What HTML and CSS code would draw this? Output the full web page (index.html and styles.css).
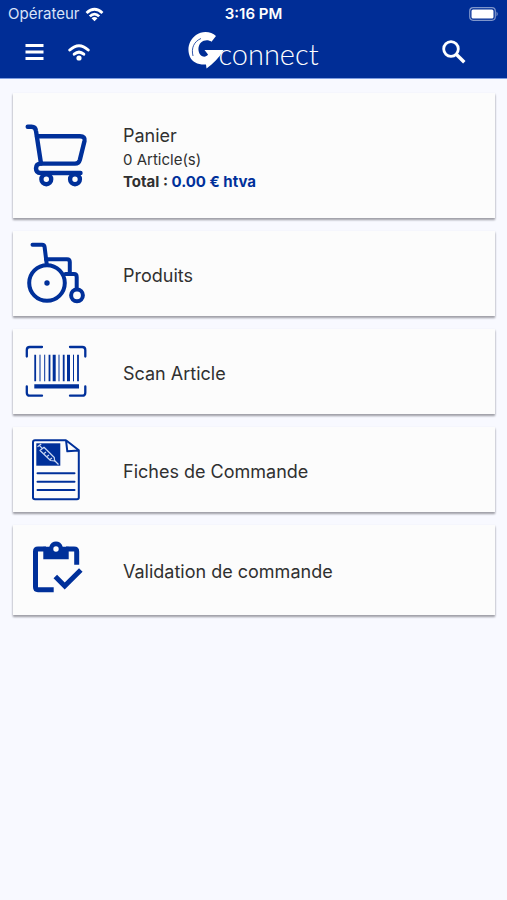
FILE: index.html
```html
<!DOCTYPE html>
<html lang="fr">
<head>
<meta charset="utf-8">
<meta name="viewport" content="width=device-width, initial-scale=1">
<title>Gconnect</title>
<link rel="stylesheet" href="styles.css">
</head>
<body>
<header class="header">
  <div class="status">
    <div class="carrier">
      <span>Opérateur</span>
      <svg class="signal" viewBox="0 0 20 16" aria-hidden="true">
        <g fill="none" stroke="#fff" stroke-width="3"><path d="M1.5 6.5Q10-1.5 18.5 6.500"/><path d="M5 10Q10 5 15 10"/></g>
        <path fill="#fff" d="M6.800 12Q10 9.500 13.200 12L10 15.200Z"/>
      </svg>
    </div>
    <span class="time">3:16 PM</span>
    <svg class="battery" viewBox="0 0 30 14" aria-hidden="true">
      <rect x=".7" y=".7" width="25.600" height="12.600" rx="3.500" fill="none" stroke="#7f96cb" stroke-width="1.200"/>
      <rect x="2.500" y="2.500" width="22" height="9" rx="1.500" fill="#fff"/>
      <path d="M27.500 4.500Q30 7 27.500 9.500Z" fill="#7f96cb"/>
    </svg>
  </div>
  <nav class="toolbar">
    <div class="tools">
      <button class="tool" type="button" aria-label="Menu">
        <svg class="menu-icon" viewBox="0 0 18 16"><path d="M0 1.500H18M0 8H18M0 14.500H18" stroke="#fff" stroke-width="3"/></svg>
      </button>
      <button class="tool" type="button" aria-label="Connexion">
        <svg class="wifi-icon" viewBox="0 0 22 17">
          <g fill="none" stroke="#fff" stroke-width="3" stroke-linecap="round"><path d="M1.800 6Q11-2.500 20.200 6"/><path d="M6.200 10.200Q11 6 15.800 10.200"/></g>
          <circle cx="11" cy="14" r="2.600" fill="#fff"/>
        </svg>
      </button>
    </div>
    <a class="brand" href="#" aria-label="Gconnect">
      <svg class="brand-mark" viewBox="0 0 36 38" aria-hidden="true">
        <path fill="#fff" d="M28 5C23 0 14-.5 8 4C1 9 -1.500 18 2 26C4.500 31 10 34 18 33.500L18.500 37.500C25 33 31 27 35.500 19H16.500L20 23.500C18.500 26 15 26.500 12.500 24C9.500 20.500 9.800 14.500 13 11.500C16 8.800 20.500 8.500 23.500 10.800Z"/>
        <path fill="none" stroke="#002d96" stroke-width=".8" d="M13 7.500C6 10.500 3 17 5 25"/>
      </svg>
      <span class="brand-name">connect</span>
    </a>
    <button class="tool search" type="button" aria-label="Rechercher">
      <svg class="search-icon" viewBox="0 0 24 24"><circle cx="9" cy="9" r="7.300" fill="none" stroke="#fff" stroke-width="2.800"/><path d="M14.500 14.500L22.300 22.300" stroke="#fff" stroke-width="3.400"/></svg>
    </button>
  </nav>
</header>
<main class="cards">
  <a class="card card-cart" href="#">
    <svg class="icon" viewBox="0 0 64 64" aria-hidden="true">
      <g fill="none" stroke="#00309a" stroke-width="4.400" stroke-linecap="round" stroke-linejoin="round">
        <path d="M3.700 2.700H7.500Q11.500 2.700 12 7L17 39.500"/>
        <path d="M13 12.200H56Q61.500 12.200 60.500 17L55.800 36Q54.800 39.600 51 39.600H16.500Q12 39.600 12 44.300Q12 49 16.500 49H56.500"/>
        <circle cx="22.300" cy="55.300" r="4.900"/><circle cx="51" cy="55.300" r="4.900"/>
      </g>
    </svg>
    <div class="body">
      <h2 class="title">Panier</h2>
      <p class="detail">0 Article(s)</p>
      <p class="detail total">Total : <span class="amount">0.00 € htva</span></p>
    </div>
  </a>
  <a class="card" href="#">
    <svg class="icon" viewBox="0 0 64 64" aria-hidden="true">
      <g fill="none" stroke="#00309a" stroke-width="4" stroke-linecap="round" stroke-linejoin="round">
        <path d="M8.500 2.700H18Q20.300 2.700 20.600 5L22.700 22"/>
        <path d="M22 17.200H43Q45.800 17.200 45.800 20V31.500"/>
        <path d="M41.500 32H50Q52.700 32 52.700 35V46"/>
        <circle cx="23" cy="41" r="17.800"/><circle cx="53" cy="53.300" r="5.900"/>
      </g>
      <circle cx="23" cy="41" r="2.700" fill="#00309a"/>
    </svg>
    <div class="body">
      <h2 class="title">Produits</h2>
    </div>
  </a>
  <a class="card" href="#">
    <svg class="icon" viewBox="0 0 64 64" aria-hidden="true">
      <g fill="none" stroke="#00309a">
        <path stroke-width="2.300" stroke-linecap="round" d="M2.800 16.500V10Q2.800 7 5.800 7H18M46 7H58.300Q61.300 7 61.300 10V16.500M61.300 46.500V52.700Q61.300 55.700 58.300 55.700H46M18 55.700H5.800Q2.800 55.700 2.800 52.700V46.500"/>
        <path stroke-width="1" d="M16 14.700V41.300M20.700 14.700V41.300M35 14.700V41.300M49.500 14.700V41.300"/>
        <path stroke-width="1.800" d="M11.200 14.700V41.300M25.500 14.700V41.300M39.700 14.700V41.300M54 14.700V41.300"/>
        <path stroke-width="3" d="M30.200 14.700V41.300M44.500 14.700V41.300"/>
        <path stroke-width="4.400" d="M10.300 46.400H55"/>
      </g>
    </svg>
    <div class="body">
      <h2 class="title">Scan Article</h2>
    </div>
  </a>
  <a class="card" href="#">
    <svg class="icon" viewBox="0 0 64 64" aria-hidden="true">
      <g fill="none" stroke="#00309a" stroke-width="2" stroke-linejoin="round">
        <path d="M42 2.200H11Q9 2.200 9 4.200V59.500Q9 61.300 11 61.300H53Q54.800 61.300 54.800 59.500V12.300L42 2.200L43.300 13.300L54.800 12.500"/>
        <path stroke-linecap="round" d="M13.500 35.200H50.500M13.500 43.700H50.500M13.500 52H50.500"/>
      </g>
      <path fill="#00309a" d="M12.300 5.300H36.300V27.700H12.300Z"/>
      <g fill="none" stroke="#cbd9f3" stroke-width="1.200" stroke-linejoin="round">
        <path d="M13.500 8.800L17.200 6M15.400 7.400L18 10.200M16 12.500L20 9.300L30.300 19.500L30.600 23L26.500 22.500Z"/>
        <path d="M30.500 22.500L34.500 26.500M20 15.500L22 14M23 18.500L25 17M26 21.500L28 20"/>
      </g>
    </svg>
    <div class="body">
      <h2 class="title">Fiches de Commande</h2>
    </div>
  </a>
  <a class="card card-validate" href="#">
    <svg class="icon" viewBox="0 0 64 64" aria-hidden="true">
      <path fill="none" stroke="#00309a" stroke-width="5" d="M29.700 51.700H14Q11.500 51.700 11.500 49V13.500Q11.500 10.900 14 10.900H22M42 10.900H50Q52.700 10.900 52.700 13.500V26.700"/>
      <path fill="none" stroke="#00309a" stroke-width="5" d="M31.300 38.500L40.700 48L56.800 32"/>
      <path fill="#00309a" fill-rule="evenodd" d="M19.300 8.700H25.300C27 1.600 37 1.600 38.700 8.700H44.700V21.300H19.300ZM32 8.300A2.700 2.700 0 1 0 32 13.700A2.700 2.700 0 1 0 32 8.300Z"/>
    </svg>
    <div class="body">
      <h2 class="title">Validation de commande</h2>
    </div>
  </a>
</main>
</body>
</html>
```
FILE: styles.css
```css
* {
  box-sizing: border-box;
}

body {
  margin: 0;
  min-height: 100vh;
  background: #f8f9ff;
  color: #303030;
  font-family: Inter, "Liberation Sans", sans-serif;
}

svg {
  display: block;
  flex: none;
}

.header {
  background: #002d96;
  border-bottom: 1px solid #7e9de0;
  color: #fff;
}

.status,
.toolbar {
  display: grid;
  grid-template-columns: 1fr auto 1fr;
  align-items: center;
}

.status {
  height: 26px;
  padding: 2px 8px 0;
  font-size: 15px;
  line-height: 20px;
}

.carrier {
  display: flex;
  align-items: center;
  gap: 5px;
  color: #d9e2f8;
}

.signal {
  width: 19px;
  height: 15px;
}

.time {
  font-weight: 600;
}

.battery {
  width: 30px;
  height: 14px;
  justify-self: end;
}

.toolbar {
  height: 52px;
  padding: 0 20px;
}

.tools {
  display: flex;
  gap: 14px;
}

.tool {
  display: flex;
  align-items: center;
  justify-content: center;
  height: 32px;
  padding: 0 5px;
  border: 0;
  background: none;
}

.menu-icon {
  width: 19px;
  height: 16px;
}

.wifi-icon {
  width: 22px;
  height: 17px;
}

.search {
  justify-self: end;
  margin-right: 16px;
}

.search-icon {
  width: 24px;
  height: 24px;
}

.brand {
  display: flex;
  align-items: center;
  align-self: start;
  padding-top: 4px;
  color: #fff;
  text-decoration: none;
}

.brand-mark {
  width: 36px;
  height: 38px;
  margin-right: -6px;
}

.brand-name {
  padding-top: 8px;
  font-family: Lato, "Liberation Sans", sans-serif;
  font-size: 29px;
  font-weight: 300;
  line-height: 32px;
}

.cards {
  display: flex;
  flex-direction: column;
  gap: 13px;
  padding: 14px 12px 14px 13px;
}

.card {
  display: flex;
  align-items: center;
  gap: 35px;
  min-height: 85px;
  padding: 10px 11px;
  background: #fcfcfc;
  box-shadow: 0 2px 2px #a0a0a8, 0 1px 2px #d0d0d8;
  color: inherit;
  text-decoration: none;
}

.card-cart {
  min-height: 125px;
}

.card-validate {
  min-height: 90px;
}

.icon {
  width: 64px;
  height: 64px;
}

.body {
  padding-top: 4px;
}

.title,
.detail {
  margin: 0;
}

.title {
  font-size: 18px;
  font-weight: 400;
  line-height: 26px;
}

.detail {
  font-size: 15px;
  line-height: 22px;
}

.total {
  font-weight: 700;
}

.amount {
  color: #00309a;
}
```
